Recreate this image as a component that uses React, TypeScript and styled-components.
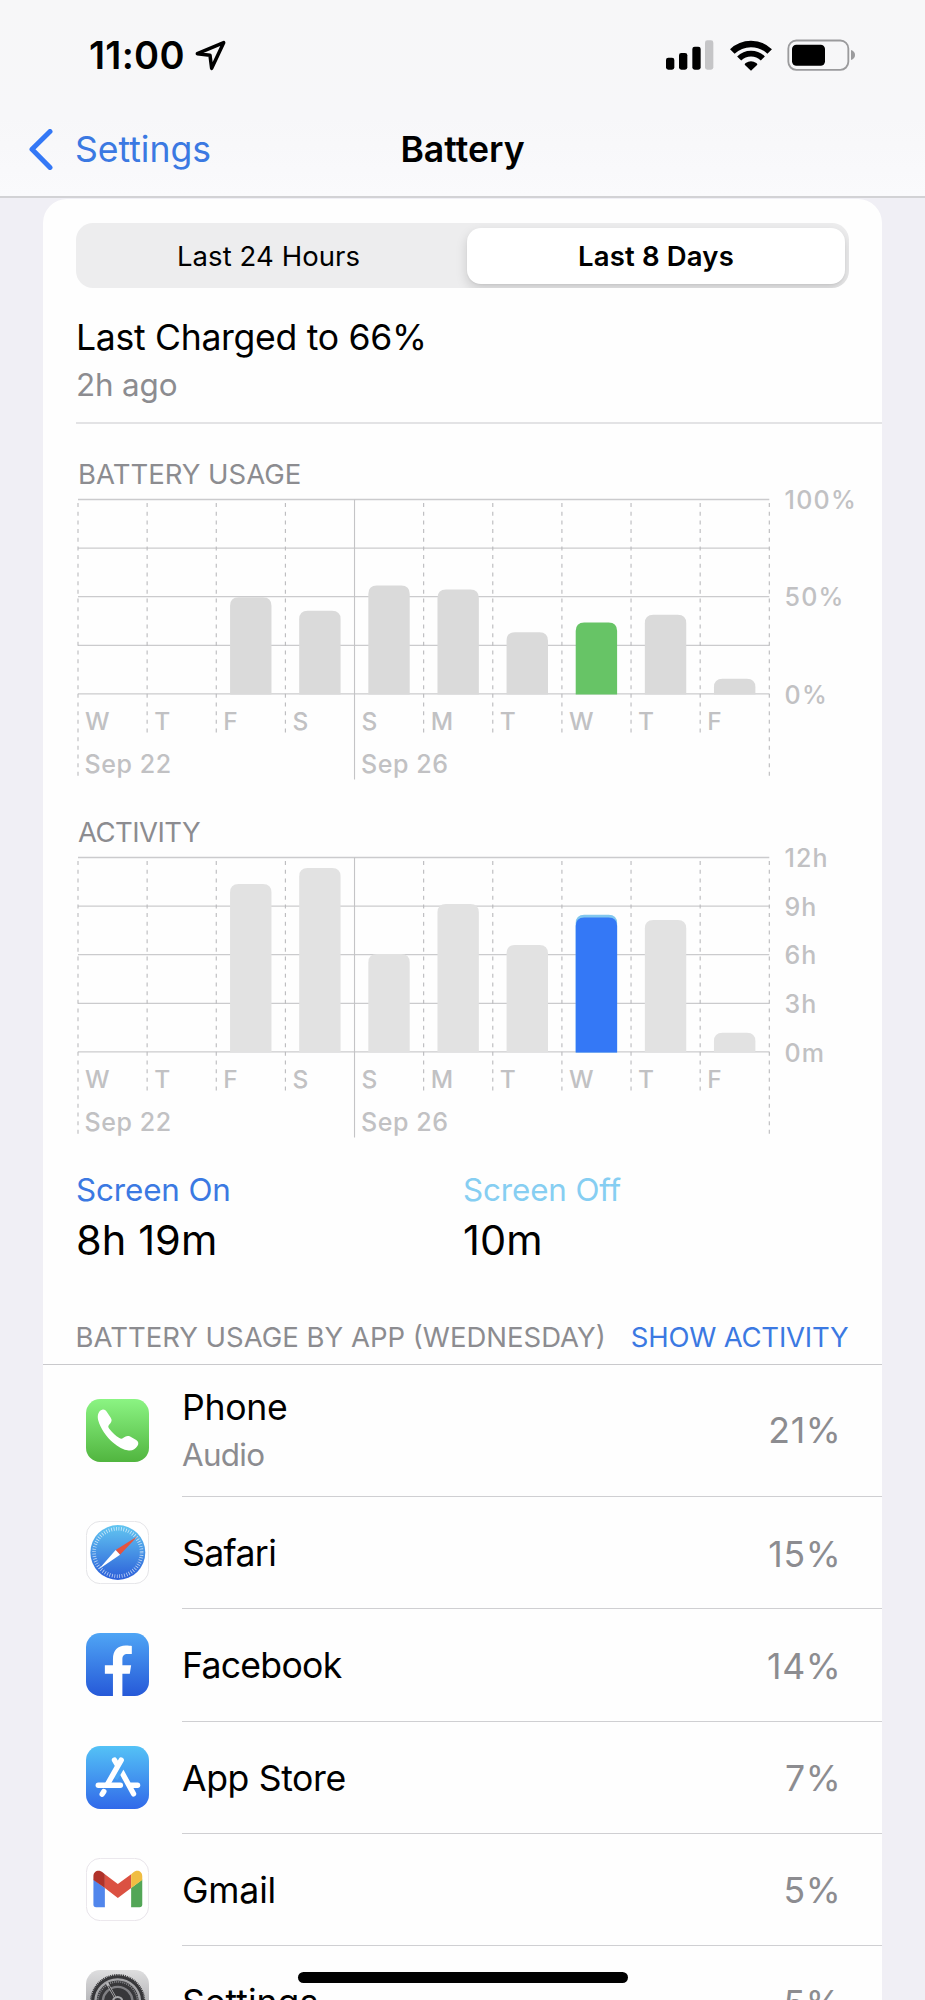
import { ReactNode } from "react";
import styled, { createGlobalStyle, css } from "styled-components";

const BLUE = "#3478f6";
const TEXT_BLUE = "#3b79e2";
const GRAY = "#8c8c90";
const AXIS_GRAY = "#c1c1c3";
const DAYS = ["W", "T", "F", "S", "S", "M", "T", "W", "T", "F"];

const BATTERY_USAGE = [0, 0, 50, 43, 56, 54, 32, 37, 41, 8];
const ACTIVITY = [0, 0, 10.4, 11.38, 6.08, 9.16, 6.63, 8.49, 8.17, 1.22];
const SELECTED_DAY = 7;

interface AppUsage {
  name: string;
  detail?: string;
  usage: string;
  icon: ReactNode;
  spacing: number;
}

export default function App(): JSX.Element {
  return (
    <Screen>
      <GlobalStyle />
      <Header>
        <StatusBar>
          <Time>11:00</Time>
          <LocationIcon />
          <StatusIcons>
            <SignalIcon />
            <WifiIcon />
            <BatteryIcon />
          </StatusIcons>
        </StatusBar>
        <NavBar>
          <BackButton>
            <BackChevron />
            Settings
          </BackButton>
          <Title>Battery</Title>
        </NavBar>
      </Header>
      <Card>
        <SegmentedControl>
          <Segment>Last 24 Hours</Segment>
          <Segment $selected>Last 8 Days</Segment>
        </SegmentedControl>
        <LastCharge>
          <LastChargeTitle>Last Charged to 66%</LastChargeTitle>
          <LastChargeTime>2h ago</LastChargeTime>
        </LastCharge>
        <ChartSection>
          <ChartTitle>BATTERY USAGE</ChartTitle>
          <BarChart
            values={BATTERY_USAGE}
            max={100}
            labels={["100%", null, "50%", null, "0%"]}
            barColor="#dadada"
            selectedColor="#67c466"
          />
        </ChartSection>
        <ChartSection>
          <ChartTitle $spacing={-0.02}>ACTIVITY</ChartTitle>
          <BarChart
            values={ACTIVITY}
            max={12}
            labels={["12h", "9h", "6h", "3h", "0m"]}
            barColor="#e2e2e2"
            selectedColor={BLUE}
            capColor="#82c7ee"
          />
        </ChartSection>
        <Stats>
          <div>
            <StatLabel $color={TEXT_BLUE}>Screen On</StatLabel>
            <StatValue>8h 19m</StatValue>
          </div>
          <div>
            <StatLabel $color="#86cef2">Screen Off</StatLabel>
            <StatValue>10m</StatValue>
          </div>
        </Stats>
        <ListHeader>
          <span>BATTERY USAGE BY APP (WEDNESDAY)</span>
          <ShowActivity>SHOW ACTIVITY</ShowActivity>
        </ListHeader>
        {APPS.map((app) => (
          <AppRow key={app.name} $tall={!!app.detail}>
            <AppIcon>{app.icon}</AppIcon>
            <AppBody $tall={!!app.detail}>
              <div>
                <AppName $spacing={app.spacing}>{app.name}</AppName>
                {app.detail && <AppDetail>{app.detail}</AppDetail>}
              </div>
              <AppPercent>{app.usage}</AppPercent>
            </AppBody>
          </AppRow>
        ))}
      </Card>
      <HomeIndicator />
    </Screen>
  );
}

interface BarChartProps {
  values: number[];
  max: number;
  labels: (string | null)[];
  barColor: string;
  selectedColor: string;
  capColor?: string;
}

function barPath(x: number, y: number, height: number): string {
  const r = 8.5;
  return `M${x} ${y + height}V${y + r}Q${x} ${y} ${x + r} ${y}H${
    x + 41.4 - r
  }Q${x + 41.4} ${y} ${x + 41.4} ${y + r}V${y + height}Z`;
}

function BarChart(props: BarChartProps): JSX.Element {
  const { values, max, labels, barColor, selectedColor, capColor } = props;
  const left = 0;
  const top = 13.5;
  const step = 69.13;
  const plotHeight = 194.4;
  const bottom = top + plotHeight;
  const right = left + step * DAYS.length;

  return (
    <ChartSvg viewBox="0 0 804 296">
      {labels.map((label, i) => {
        const y = top + (plotHeight / 4) * i;
        return (
          <g key={i}>
            <line x1={left} x2={right} y1={y} y2={y} stroke="#cbcbcd" strokeWidth={1.3} />
            {label && (
              <AxisLabel x={706.5} y={y + 9.6} $spacing={label.includes("%") ? 0.05 : 0.045}>
                {label}
              </AxisLabel>
            )}
          </g>
        );
      })}
      {Array.from({ length: DAYS.length + 1 }, (_, i) => {
        const x = left + step * i;
        const weekStart = i === 4;
        const edge = i === 0 || i === DAYS.length;
        return (
          <line
            key={i}
            x1={x}
            x2={x}
            y1={top}
            y2={weekStart ? 293.5 : edge ? 290 : 247}
            stroke={weekStart ? "#c4c4c6" : "#bababd"}
            strokeWidth={1.1}
            strokeDasharray={weekStart ? undefined : "4 4.67"}
            strokeDashoffset={5.07}
          />
        );
      })}
      {values.map((value, i) => {
        if (!value) return null;
        const height = (value / max) * plotHeight;
        const x = left + step * i + 13.8;
        const y = bottom - height + 0.5;
        const selected = i === SELECTED_DAY;
        return (
          <g key={i}>
            <path
              d={barPath(x, y, height)}
              fill={selected ? capColor ?? selectedColor : barColor}
            />
            {selected && capColor && (
              <path d={barPath(x, y + 2.7, height - 2.7)} fill={selectedColor} />
            )}
          </g>
        );
      })}
      {DAYS.map((day, i) => (
        <DayLabel key={i} x={left + step * i + 7} y={243.6}>
          {day}
        </DayLabel>
      ))}
      <AxisLabel x={6.5} y={286.7} $spacing={0.023}>
        Sep 22
      </AxisLabel>
      <AxisLabel x={283} y={286.7} $spacing={0.023}>
        Sep 26
      </AxisLabel>
    </ChartSvg>
  );
}

function LocationIcon() {
  return (
    <svg width="32" height="31" viewBox="587 120 96 93">
      <path
        d="M594 161L673 128L637 205L632 166Z"
        fill="none"
        stroke="#000"
        strokeWidth="10.5"
        strokeLinejoin="round"
      />
    </svg>
  );
}

function SignalIcon() {
  return (
    <svg width="48" height="30" viewBox="612 118 144 90">
      <rect x="612" y="171" width="25" height="36" rx="7" />
      <rect x="651" y="157" width="25" height="50" rx="7" />
      <rect x="691" y="138" width="25" height="69" rx="7" />
      <rect x="729" y="119" width="25" height="88" rx="7" fill="#c5c5c7" />
    </svg>
  );
}

function WifiIcon() {
  return (
    <svg width="42" height="31" viewBox="802 115 126 93">
      <g fill="none" stroke="#000">
        <path d="M809 149.5A80 80 0 0 1 921 149.5" strokeWidth="19.5" />
        <path d="M829.5 170.5A51 51 0 0 1 900.5 170.5" strokeWidth="17.5" />
      </g>
      <path d="M865 207L846 189Q846 186 849 184Q865 174 881 184Q884 186 884 189Z" />
    </svg>
  );
}

function BatteryIcon() {
  return (
    <svg width="69" height="32" viewBox="975 115 207 96">
      <rect
        x="979"
        y="119.5"
        width="180"
        height="88"
        rx="24"
        fill="none"
        stroke="#9b9b9d"
        strokeWidth="5.5"
      />
      <rect x="990" y="132" width="99" height="63" rx="13" />
      <path d="M1167 148Q1179 152 1179 163Q1179 174 1167 178Z" fill="#9b9b9d" />
    </svg>
  );
}

function BackChevron() {
  return (
    <svg width="24" height="41" viewBox="0 0 24 41">
      <path
        d="M21 2.5L3 20.3L21 38.5"
        fill="none"
        stroke={BLUE}
        strokeWidth="5"
        strokeLinecap="round"
        strokeLinejoin="round"
      />
    </svg>
  );
}

function Gradient({ id, from, to }: { id: string; from: string; to: string }) {
  return (
    <linearGradient id={id} x1="0" y1="0" x2="0" y2="1">
      <stop offset="0" stopColor={from} />
      <stop offset="1" stopColor={to} />
    </linearGradient>
  );
}

function PhoneAppIcon() {
  return (
    <svg viewBox="0 0 187 187">
      <Gradient id="phone" from="#8bf483" to="#51b53f" />
      <rect width="187" height="187" rx="42" fill="url(#phone)" />
      <path
        fill="#fff"
        d="M48 32C53 30 58 33 61 37L73 55C77 61 77 66 73 71L68 77C65 81 66 84 69 88C78 100 88 109 99 116C103 119 107 119 110 116L116 112C121 109 126 109 131 111L149 122C156 127 157 133 153 139C147 149 138 154 127 153C111 151 95 142 80 129C60 111 43 87 36 62C33 48 37 35 48 32Z"
      />
    </svg>
  );
}

function SafariAppIcon() {
  return (
    <svg viewBox="0 0 187 187">
      <Gradient id="safari" from="#62c6f1" to="#2c5fd9" />
      <rect x="1" y="1" width="185" height="185" rx="42" fill="#fff" stroke="#dfdfe2" strokeWidth="2.5" />
      <circle cx="94.5" cy="93.5" r="81.5" fill="url(#safari)" />
      <circle
        cx="94.5"
        cy="93.5"
        r="70.5"
        fill="none"
        stroke="#fff"
        strokeOpacity=".7"
        strokeWidth="11"
        strokeDasharray="2.3 5.083"
      />
      <path d="M153 45L88 86L101 100Z" fill="#e5533f" />
      <path d="M88 86L101 100L38 143Z" fill="#fff" />
    </svg>
  );
}

function FacebookAppIcon() {
  return (
    <svg viewBox="0 0 187 187">
      <Gradient id="facebook" from="#4fa5f5" to="#2659d8" />
      <rect width="187" height="187" rx="42" fill="url(#facebook)" />
      <path
        fill="#fff"
        d="M80 187V121H56V96H80V78C80 51 94 37 118 37C126 37 132 38 136 38.5V62H124C112 62 108 68 108 77V96H134L130 121H108V187Z"
      />
    </svg>
  );
}

function AppStoreAppIcon() {
  return (
    <svg viewBox="0 0 187 187">
      <Gradient id="appstore" from="#54c2f6" to="#3169e9" />
      <rect width="187" height="187" rx="42" fill="url(#appstore)" />
      <g stroke="#fff" strokeWidth="16" strokeLinecap="round">
        <path d="M36.500 116.500H102" />
        <path d="M134 116.500H153" />
        <path d="M53 135L48 143" />
        <path d="M106 77L141 142" />
        {/* gap between the two crossing sticks */}
        <path d="M103 60L83 95" stroke="#47a3f2" strokeWidth="24" strokeLinecap="butt" />
        <path d="M84.500 42L93 56" />
        <path d="M104.500 42L64 113" />
      </g>
    </svg>
  );
}

function GmailAppIcon() {
  return (
    <svg viewBox="0 0 187 187">
      <rect x="1" y="1" width="185" height="185" rx="42" fill="#fff" stroke="#e4dfe6" strokeWidth="2.5" />
      <path d="M22 64L56 89V146H30Q22 146 22 138Z" fill="#5186ec" />
      <path d="M134 89L167 64V138Q167 146 159 146H134Z" fill="#53a657" />
      <path d="M56 48L94.5 77L134 48V89L94.5 119L56 89Z" fill="#db5142" />
      <path d="M22 64V54C22 39 38 33 50 43L56 48V89L22 65Z" fill="#b0322a" />
      <path d="M167 64V54C167 39 151 33 140 43L134 48V89L167 65Z" fill="#f0bd42" />
    </svg>
  );
}

function SettingsAppIcon() {
  return (
    <svg viewBox="0 0 187 187">
      <Gradient id="settings" from="#dededf" to="#8f8f94" />
      <rect width="187" height="187" rx="42" fill="url(#settings)" />
      <g fill="none">
        <circle cx="94" cy="94" r="76" stroke="#37373a" strokeWidth="5" fill="#37373a" />
        <circle cx="94" cy="94" r="79" stroke="#37373a" strokeWidth="6" strokeDasharray="3 2.516" />
        <circle cx="94" cy="94" r="66" stroke="#a5a5a8" strokeWidth="7" />
        <circle cx="94" cy="94" r="59" stroke="#8b8b8f" strokeWidth="5" strokeDasharray="3 3.178" />
        <circle cx="94" cy="94" r="44" stroke="#7f7f83" strokeWidth="7" />
        <path d="M94 94L62 38M94 94L62 150M94 94H158" stroke="#b9b9bc" strokeWidth="7" />
        <path d="M94 94L67 47" stroke="#37373a" strokeWidth="3" />
        <circle cx="94" cy="94" r="14" fill="#37373a" stroke="#a5a5a8" strokeWidth="6" />
      </g>
    </svg>
  );
}

const APPS: AppUsage[] = [
  { name: "Phone", detail: "Audio", usage: "21%", icon: <PhoneAppIcon />, spacing: -0.007 },
  { name: "Safari", usage: "15%", icon: <SafariAppIcon />, spacing: -0.018 },
  { name: "Facebook", usage: "14%", icon: <FacebookAppIcon />, spacing: -0.02 },
  { name: "App Store", usage: "7%", icon: <AppStoreAppIcon />, spacing: -0.01 },
  { name: "Gmail", usage: "5%", icon: <GmailAppIcon />, spacing: -0.005 },
  { name: "Settings", usage: "5%", icon: <SettingsAppIcon />, spacing: 0 },
];

const GlobalStyle = createGlobalStyle`
  * {
    box-sizing: border-box;
  }

  body {
    margin: 0;
    background: #f0eff5;
    font-family: Inter, "Liberation Sans", sans-serif;
    color: #000;
  }

  svg {
    display: block;
  }
`;

const Screen = styled.div`
  position: relative;
  width: 925px;
  height: 2000px;
  overflow: hidden;
  background: #f0eff5;
`;

const Header = styled.header`
  height: 198px;
  border-bottom: 2px solid #d2d2d5;
  background: linear-gradient(180deg, #f7f7f8, #f7f7f9 60%, #fafafc);
`;

const StatusBar = styled.div`
  display: flex;
  align-items: center;
  height: 111px;
  padding: 0 69px 1px 89px;
`;

const Time = styled.span`
  font-size: 38px;
  font-weight: 600;
  letter-spacing: 0.007em;
  margin-right: 10.5px;
`;

const StatusIcons = styled.div`
  display: flex;
  align-items: center;
  margin-left: auto;

  svg + svg {
    margin-left: 15.5px;
  }
`;

const NavBar = styled.nav`
  display: grid;
  grid-template-columns: 1fr auto 1fr;
  align-items: center;
  height: 76px;
  padding-left: 29px;
  padding-right: 29px;
`;

const BackButton = styled.div`
  display: flex;
  align-items: center;
  gap: 22px;
  font-size: 35.6px;
  letter-spacing: -0.001em;
  color: ${TEXT_BLUE};
`;

const Title = styled.h1`
  margin: 0;
  font-size: 35.6px;
  font-weight: 600;
`;

const Card = styled.main`
  width: 839px;
  margin: 1px 0 0 43px;
  padding-top: 24px;
  border-radius: 24px 24px 0 0;
  background: #fefefe;
`;

const SegmentedControl = styled.div`
  display: grid;
  grid-template-columns: 391px 378px;
  height: 65px;
  margin: 0 33px;
  padding: 5px 4px 4px 0;
  border-radius: 17px;
  background: #ededee;
  overflow: hidden;
`;

const Segment = styled.div<{ $selected?: boolean }>`
  display: flex;
  align-items: center;
  justify-content: center;
  font-size: 27.5px;
  font-weight: 400;
  letter-spacing: 0.003em;
  padding-right: 6px;

  ${(p) =>
    p.$selected &&
    css`
      padding-right: 0;
      border-radius: 14px;
      background: #fff;
      font-weight: 600;
      letter-spacing: 0.006em;
      box-shadow: 0 5px 12px rgba(0, 0, 0, 0.15), 0 1px 2px rgba(0, 0, 0, 0.05);
    `}
`;

const LastCharge = styled.div`
  height: 136px;
  margin-left: 33px;
  padding-top: 28px;
  border-bottom: 2px solid #e3e3e5;
`;

const LastChargeTitle = styled.div`
  font-size: 35.6px;
  line-height: 44px;
  letter-spacing: -0.0085em;
`;

const LastChargeTime = styled.div`
  margin-top: 5px;
  font-size: 31.4px;
  line-height: 40px;
  letter-spacing: -0.005em;
  color: ${GRAY};
`;

const ChartSection = styled.section`
  padding: 38px 0 0 35px;
`;

const ChartTitle = styled.h2<{ $spacing?: number }>`
  margin: 0;
  font-size: 27.5px;
  font-weight: 400;
  line-height: 24px;
  letter-spacing: ${(p) => p.$spacing ?? 0}em;
  color: ${GRAY};
`;

const ChartSvg = styled.svg`
  width: 804px;
  height: 296px;
  overflow: visible;
`;

const AxisLabel = styled.text<{ $spacing: number }>`
  font-size: 25px;
  font-weight: 500;
  letter-spacing: ${(p) => p.$spacing}em;
  fill: ${AXIS_GRAY};
`;

const DayLabel = styled.text`
  font-size: 24.5px;
  font-weight: 500;
  fill: ${AXIS_GRAY};
`;

const Stats = styled.div`
  display: grid;
  grid-template-columns: 387px 1fr;
  margin: 30px 0 0 33px;
`;

const StatLabel = styled.div<{ $color: string }>`
  font-size: 31.4px;
  line-height: 40px;
  letter-spacing: -0.004em;
  color: ${(p) => p.$color};
`;

const StatValue = styled.div`
  margin-top: 5px;
  font-size: 41.5px;
  line-height: 50px;
  letter-spacing: 0.002em;
`;

const ListHeader = styled.div`
  display: flex;
  justify-content: space-between;
  height: 49px;
  margin-top: 51px;
  padding: 6px 33.5px 0 32.5px;
  border-bottom: 1px solid #c9c9cc;
  font-size: 27.5px;
  line-height: 30px;
  color: ${GRAY};
`;

const ShowActivity = styled.span`
  letter-spacing: -0.008em;
  color: ${TEXT_BLUE};
`;

const AppRow = styled.div<{ $tall: boolean }>`
  display: flex;
  align-items: center;
  height: ${(p) => (p.$tall ? 132 : 112.25)}px;
  padding-left: 43px;
`;

const AppIcon = styled.div`
  width: 63px;
  height: 63px;
  margin-right: 33px;
  margin-bottom: 1px;
`;

const AppBody = styled.div<{ $tall: boolean }>`
  flex: 1;
  display: flex;
  align-items: center;
  justify-content: space-between;
  height: 100%;
  padding-top: ${(p) => (p.$tall ? 0 : 3)}px;
  padding-right: 40.5px;
  border-bottom: 1px solid #cfcfd2;
`;

const AppName = styled.div<{ $spacing: number }>`
  font-size: 35.6px;
  line-height: 46px;
  letter-spacing: ${(p) => p.$spacing}em;
`;

const AppDetail = styled.div`
  margin-top: 3px;
  font-size: 31.4px;
  line-height: 42px;
  letter-spacing: -0.022em;
  color: ${GRAY};
`;

const AppPercent = styled.div`
  font-size: 35.6px;
  letter-spacing: 0.02em;
  color: ${GRAY};
`;

const HomeIndicator = styled.div`
  position: absolute;
  left: 297.5px;
  bottom: 17px;
  width: 330.5px;
  height: 11px;
  border-radius: 6px;
  background: #000;
`;
